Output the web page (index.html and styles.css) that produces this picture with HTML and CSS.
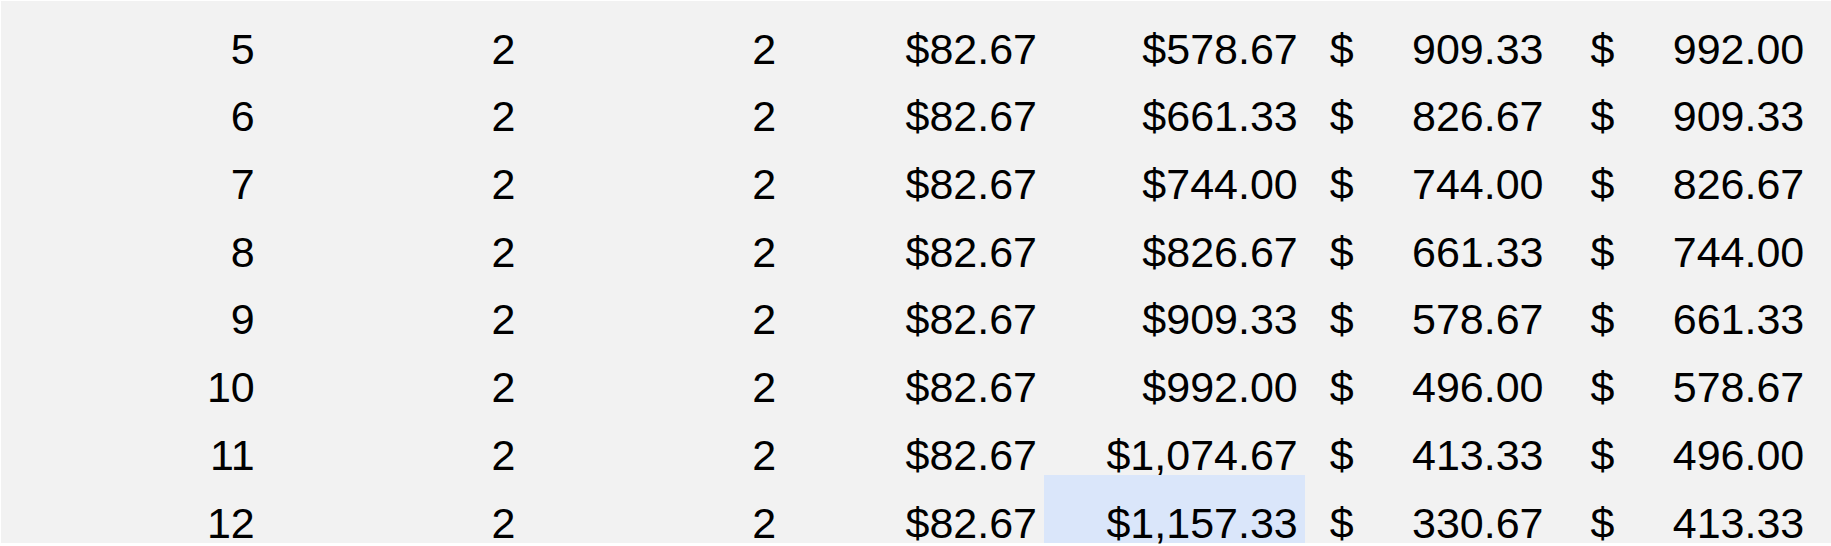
FILE: index.html
```html
<!DOCTYPE html>
<html>
<head>
<meta charset="utf-8">
<link rel="stylesheet" href="styles.css">
</head>
<body>
<div class="sheet">
  <div class="cell num">5</div><div class="cell num">2</div><div class="cell num">2</div><div class="cell num">$82.67</div><div class="cell num">$578.67</div><div class="cell acct"><span>$</span><span>909.33</span></div><div class="cell acct"><span>$</span><span>992.00</span></div>
  <div class="cell num">6</div><div class="cell num">2</div><div class="cell num">2</div><div class="cell num">$82.67</div><div class="cell num">$661.33</div><div class="cell acct"><span>$</span><span>826.67</span></div><div class="cell acct"><span>$</span><span>909.33</span></div>
  <div class="cell num">7</div><div class="cell num">2</div><div class="cell num">2</div><div class="cell num">$82.67</div><div class="cell num">$744.00</div><div class="cell acct"><span>$</span><span>744.00</span></div><div class="cell acct"><span>$</span><span>826.67</span></div>
  <div class="cell num">8</div><div class="cell num">2</div><div class="cell num">2</div><div class="cell num">$82.67</div><div class="cell num">$826.67</div><div class="cell acct"><span>$</span><span>661.33</span></div><div class="cell acct"><span>$</span><span>744.00</span></div>
  <div class="cell num">9</div><div class="cell num">2</div><div class="cell num">2</div><div class="cell num">$82.67</div><div class="cell num">$909.33</div><div class="cell acct"><span>$</span><span>578.67</span></div><div class="cell acct"><span>$</span><span>661.33</span></div>
  <div class="cell num">10</div><div class="cell num">2</div><div class="cell num">2</div><div class="cell num">$82.67</div><div class="cell num">$992.00</div><div class="cell acct"><span>$</span><span>496.00</span></div><div class="cell acct"><span>$</span><span>578.67</span></div>
  <div class="cell num">11</div><div class="cell num">2</div><div class="cell num">2</div><div class="cell num">$82.67</div><div class="cell num">$1,074.67</div><div class="cell acct"><span>$</span><span>413.33</span></div><div class="cell acct"><span>$</span><span>496.00</span></div>
  <div class="cell num">12</div><div class="cell num">2</div><div class="cell num">2</div><div class="cell num">$82.67</div><div class="cell num selected">$1,157.33</div><div class="cell acct"><span>$</span><span>330.67</span></div><div class="cell acct"><span>$</span><span>413.33</span></div>
</div>
</body>
</html>
```

FILE: styles.css
```css
html, body {
  margin: 0;
  padding: 0;
  background: #ffffff;
  width: 1831px;
  height: 546px;
  overflow: hidden;
}

.sheet {
  margin: 1px 0 0 1px;
  background: #f2f2f2;
  display: grid;
  grid-template-columns: repeat(7, 260.75px);
  grid-auto-rows: 67.7px;
  font-family: "Liberation Sans", Arial, sans-serif;
  font-size: 43px;
  line-height: 40px;
  color: #000000;
}

.cell {
  display: flex;
  align-items: flex-end;
  white-space: nowrap;
}

.num {
  justify-content: flex-end;
  padding-right: 7px;
}

.acct {
  justify-content: space-between;
  padding-left: 25px;
  padding-right: 22px;
}

.selected {
  background: #dae6fa;
}
```
